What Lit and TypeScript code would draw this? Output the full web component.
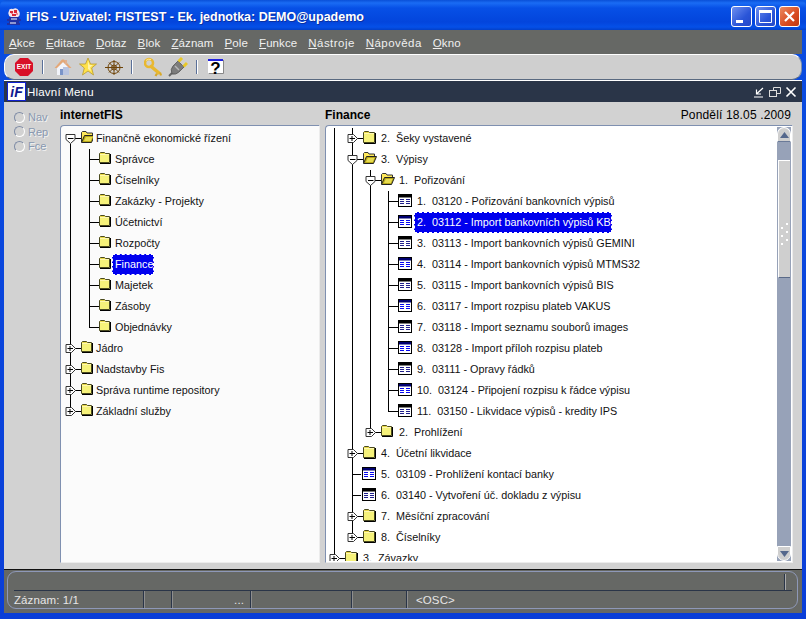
import { LitElement, html, css, svg } from "lit";
import { customElement } from "lit/decorators.js";
import { styleMap } from "lit/directives/style-map.js";

type Row = { g?: number[]; half?: number; exp?: [number, boolean]; h?: [number, number]; icon: string; ix: number; lx: number; t: string; sel?: boolean };

const folderIcon = (x: number, small = false) => {
  const w = small ? 12 : 13;
  return svg`<g transform="translate(${x} 3)">
    <path d="M0.5 1.5 L1.5 0.5 H5.5 L6.5 1.5 H${w - 1.5} V${w === 12 ? 10.5 : 11.5} H0.5 Z" fill="#e8d848" stroke="#4a4a20"/>
    <rect x="1" y="3" width="${w - 3}" height="${w === 12 ? 7 : 8}" fill="#f6f27a"/>
    <path d="M1 2.5 H${w - 2}" stroke="#fff8b0"/>
    <path d="M${w - 0.5} 2 V${w === 12 ? 11.5 : 12.5} H1" stroke="#000" fill="none"/>
  </g>`;
};
const openIcon = (x: number) => svg`<g transform="translate(${x} 3)">
  <path d="M0.5 11 V1.5 L1.5 0.5 H5 L6 2 H11.5 V4" fill="#ffe95a" stroke="#333"/>
  <path d="M0.5 11.5 L3.5 4.5 H13.5 L10.5 11.5 Z" fill="#b8a818" stroke="#222"/>
  <path d="M3 10 L4.8 6 H11.5 L9.8 10 Z" fill="#e8dc50"/>
</g>`;
const docIcon = (x: number, blue: boolean) => {
  const c = blue ? "#0808f0" : "#20208c";
  const hdr = blue ? "#000070" : "#000";
  return svg`<g transform="translate(${x} 3)">
    <rect x="0.5" y="0.5" width="13" height="12" fill="#fff" stroke="#000"/>
    <rect x="1" y="1" width="12" height="2.5" fill="${hdr}"/>
    <path d="M2 5.5 H6 M8 5.5 H12 M2 7.5 H6 M8 7.5 H12 M2 9.5 H6 M8 9.5 H12" stroke="${c}"/>
  </g>`;
};
const expander = (x: number, open: boolean) => open
  ? svg`<path d="M${x} 16 V21" stroke="#000"/><path d="M${x - 4.5} 6.5 H${x + 4.5} V11.5 L${x} 15.5 L${x - 4.5} 11.5 Z" fill="#fff" stroke="#333"/><path d="M${x - 2.5} 10.5 H${x + 3}" stroke="#000"/>`
  : svg`<path d="M${x - 4.5} 6.5 H${x + 1} L${x + 5} 10.5 L${x + 1} 14.5 H${x - 4.5} Z" fill="#fff" stroke="#333"/><path d="M${x - 3} 10.5 H${x + 2.5} M${x - 0.5} 8 V13" stroke="#000"/>`;

const L = (o: Partial<Row>) => o as Row;

const leftRows: Row[] = [
  L({ exp: [70, true], h: [75, 81], icon: "open", ix: 81, lx: 96, t: "Finančně ekonomické řízení" }),
  ...["Správce", "Číselníky", "Zakázky - Projekty", "Účetnictví", "Rozpočty", "Finance", "Majetek", "Zásoby", "Objednávky"].map((t, i, a) =>
    L({ g: i === a.length - 1 ? [70] : [70, 89], half: i === a.length - 1 ? 89 : undefined, h: [89, 100], icon: "folderS", ix: 99, lx: 115, t, sel: t === "Finance" })),
  ...["Jádro", "Nadstavby Fis", "Správa runtime repository", "Základní služby"].map((t, i, a) =>
    L({ g: i === a.length - 1 ? [] : [70], half: i === a.length - 1 ? 70 : undefined, exp: [70, false], h: [75, 81], icon: "folderS", ix: 81, lx: 96, t })),
];

const items = [
  "03120 - Pořizování bankovních výpisů",
  "03112 - Import bankovních výpisů KB",
  "03113 - Import bankovních výpisů GEMINI",
  "03114 - Import bankovních výpisů MTMS32",
  "03115 - Import bankovních výpisů BIS",
  "03117 - Import rozpisu plateb VAKUS",
  "03118 - Import seznamu souborů images",
  "03128 - Import příloh rozpisu plateb",
  "03111 - Opravy řádků",
  "03124 - Připojení rozpisu k řádce výpisu",
  "03150 - Likvidace výpisů - kredity IPS",
];
const rightRows: Row[] = [
  L({ g: [334, 352], exp: [352, false], h: [357, 363], icon: "folder", ix: 363, lx: 381, t: "2.  Šeky vystavené" }),
  L({ g: [334, 352], exp: [352, true], h: [357, 363], icon: "open", ix: 363, lx: 381, t: "3.  Výpisy" }),
  L({ g: [334, 352, 370], exp: [370, true], h: [375, 381], icon: "open", ix: 381, lx: 399, t: "1.  Pořizování" }),
  ...items.map((t, i) => L({ g: i === 10 ? [334, 352, 370] : [334, 352, 370, 388], half: i === 10 ? 388 : undefined, h: [388, 398], icon: i % 2 === 0 ? "doc" : "docB", ix: 398, lx: 417, t: `${i + 1}.  ${t}`, sel: i === 1 })),
  L({ g: [334, 352], half: 370, exp: [370, false], h: [375, 381], icon: "folderS", ix: 381, lx: 399, t: "2.  Prohlížení" }),
  L({ g: [334, 352], exp: [352, false], h: [357, 363], icon: "folder", ix: 363, lx: 381, t: "4.  Účetní likvidace" }),
  L({ g: [334, 352], h: [352, 361], icon: "docB", ix: 362, lx: 381, t: "5.  03109 - Prohlížení kontací banky" }),
  L({ g: [334, 352], h: [352, 361], icon: "doc", ix: 362, lx: 381, t: "6.  03140 - Vytvoření úč. dokladu z výpisu" }),
  L({ g: [334, 352], exp: [352, false], h: [357, 363], icon: "folder", ix: 363, lx: 381, t: "7.  Měsíční zpracování" }),
  L({ g: [334], half: 352, exp: [352, false], h: [357, 363], icon: "folder", ix: 363, lx: 381, t: "8.  Číselníky" }),
  L({ g: [], half: 334, exp: [334, false], h: [339, 345], icon: "folder", ix: 345, lx: 363, t: "3.  Závazky" }),
];

const menu = ["Akce", "Editace", "Dotaz", "Blok", "Záznam", "Pole", "Funkce", "Nástroje", "Nápověda", "Okno"];

@customElement("app-root")
export class AppRoot extends LitElement {
  static styles = css`
    :host { display: block; width: 806px; height: 619px; overflow: hidden; font-family: "Liberation Sans", Arial, sans-serif; font-size: 11px; background: #0a3ed8; }
    .win { width: 806px; height: 619px; display: flex; flex-direction: column; box-sizing: border-box; padding: 0 4px 6px 4px;
      background: linear-gradient(180deg, #0a5ae8 0, #0a4ce0 30px, #0a3ed8 100%); }
    .title { height: 30px; flex: none; box-sizing: border-box; margin: 0 -4px; padding: 3px 6px 0 6px; display: flex; align-items: center; color: #fff; font-weight: bold; font-size: 12.5px;
      background: linear-gradient(180deg, #0a50d8 0, #1a6cf4 3px, #0750e6 8px, #0345dc 22px, #0550e8 27px, #0340c8 30px); border-radius: 6px 6px 0 0; }
    .title .logo { margin-right: 4px; flex: none; }
    .title .txt { flex: 1; white-space: pre; text-shadow: 1px 1px 0 #0a2fa0; }
    .cap { width: 21px; height: 21px; box-sizing: border-box; border: 1px solid #fff; border-radius: 3px; margin-left: 3px; display: block; flex: none; }
    .cap.b { background: linear-gradient(135deg, #6f90f0, #2a55d8 60%, #2448c8); }
    .cap.r { background: linear-gradient(135deg, #ec8a60, #d84a20 60%, #c03810); }
    .menu { height: 24px; flex: none; background: #666865; display: flex; align-items: center; padding-left: 5px; color: #f0f0f0; font-size: 11.5px; letter-spacing: .1px; box-sizing: border-box; padding-top: 2px; }
    .menu span { margin-right: 11px; white-space: pre; }
    .menu span:nth-child(8), .menu span:nth-child(9) { letter-spacing: .45px; }
    .menu u { text-decoration: underline; text-underline-offset: 1px; }
    .toolbar { height: 26px; flex: none; box-sizing: border-box; background: #cfcfcf; border-top: 1px solid #fff; border-bottom: 1px solid #5a6a80; border-left: 1px solid #fff; border-right: 1px solid #8090a8; border-radius: 10px; display: flex; align-items: center; padding-left: 9px; }
    .toolbar svg { flex: none; display: block; }
    .sep { width: 3px; height: 14px; flex: none; background: linear-gradient(90deg, #5a7098 0 1px, #fff 1px 2px, transparent 2px); }
    .inner { flex: 1; min-height: 0; display: flex; flex-direction: column; background: #d2d2d2; border-top: 1px solid #fff; }
    .ibar { height: 21px; flex: none; background: #2a3548; color: #fff; display: flex; align-items: center; font-size: 11.5px; padding: 0 5px 0 3px; }
    .ibar .lg { flex: none; margin-right: 1px; }
    .ibar .ttl { flex: 1; white-space: pre; letter-spacing: .2px; }
    .ibar svg.c { display: block; margin-left: 4px; flex: none; }
    .ibody { flex: 1; min-height: 0; display: grid; grid-template-columns: 51px 260px 468px; column-gap: 5px; padding: 5px 9px 6px 0; }
    .radios { padding: 3px 0 0 10px; display: flex; flex-direction: column; gap: .5px; color: #8898b0; font-size: 11px; }
    .radio { height: 14px; display: flex; align-items: center; gap: 3px; }
    .radio span { text-shadow: 1px 1px 0 #f2f2f2; }
    .radio i { width: 11px; height: 11px; box-sizing: border-box; border-radius: 50%; border: 1px solid #7f8ca6; border-bottom-color: #fff; border-right-color: #fff; flex: none; background: #d2d2d2; }
    .col { display: flex; flex-direction: column; min-height: 0; min-width: 0; }
    .hd { flex: none; font-weight: bold; font-size: 12px; color: #000; display: flex; align-items: center; justify-content: space-between; padding-bottom: 3px; height: 15px; }
    .hd .d { font-weight: normal; font-size: 12px; letter-spacing: .15px; padding-right: 2px; }
    .panel { flex: 1; min-height: 0; overflow: hidden; box-sizing: border-box; background: #fff; padding: 1px; border: 1px solid #ececec; border-top-color: #7f90b0; border-left-color: #7f90b0; border-radius: 4px 0 0 0; display: flex; }
    .panel.l { background: #fbfbfb; }
    .rows { flex: 1; min-width: 0; overflow: hidden; padding-top: 1px; }
    .row { height: 21px; display: flex; align-items: center; color: #111; white-space: pre; font-size: 10.8px; }
    .row svg { flex: none; display: block; align-self: stretch; }
    .lbl { padding: 0 1px 0 3px; line-height: 21px; }
    .lbl.sel { background: #0000ee; color: #fff; outline: 1px dashed #fff; outline-offset: -1px; }
    .sb { width: 14px; flex: none; background: #97a2b8; display: flex; flex-direction: column; }
    .sbb { height: 15px; flex: none; background: #cfcfcf; display: flex; align-items: center; justify-content: center; box-sizing: border-box; }
    .sbb.u { border-radius: 7px 7px 0 0; border-top: 1px solid #fff; border-right: 1px solid #fff; border-left: 1px solid #fff; border-bottom: 1px solid #6a7a98; }
    .sbb.d { border-radius: 0 0 7px 7px; border: 1px solid #fff; }
    .thumb { height: 118px; margin: 18px 1px 0 1px; flex: none; background: #cfcfcf; border-top: 1px solid #fff; border-left: 1px solid #fff; border-bottom: 1px solid #5a6a88; display: flex; align-items: center; justify-content: center; box-sizing: border-box; padding-top: 30px; }
    .sp { flex: 1; }
    .status { height: 44px; flex: none; background: #666865; padding: 1px 4px 4px 3px; border-top: 1px solid #111; box-sizing: border-box; }
    .sbox { height: 38px; box-sizing: border-box; border: 1px solid #8e98b8; border-radius: 9px; padding: 0 5px 0 6px; display: flex; flex-direction: column; }
    .stop { height: 18px; flex: none; border-bottom: 1px solid #2a3548; display: flex; justify-content: flex-end; }
    .sbot { flex: 1; display: grid; grid-template-columns: 130px 28px 79px 101px 55px 1fr; color: #e6e6e6; font-size: 11.5px; letter-spacing: .1px; align-items: center; }
    .cell { height: 100%; display: flex; align-items: center; white-space: pre; }
    .cell + .cell { padding-left: 9px; }
    .dots { justify-content: flex-end; padding-right: 6px; }
    .dv { border-right: 1px solid #2a3548; box-shadow: 1px 0 0 #8e8e8e; }
    .dv2 { width: 1px; background: #2a3548; box-shadow: 1px 0 0 #aaa; margin: 2px 7px 0 0; }
    .m7 { margin-left: 7px; }
    .m8 { margin-left: 8px; }
    .m6 { margin-left: 6px; }
    .s1 { margin: 0 9px 0 8px; }
    .s2 { margin: 0 10px 0 8px; }
    .s3 { margin: 0 8px 0 8px; }
  `;

  private row(r: Row, origin: number) {
    const w = r.lx - origin - 3;
    let icon;
    if (r.icon === "open") icon = openIcon(r.ix);
    else if (r.icon === "folder") icon = folderIcon(r.ix);
    else if (r.icon === "folderS") icon = folderIcon(r.ix, true);
    else icon = docIcon(r.ix, r.icon === "docB");
    return html`<div class="row">
      <svg width=${w} height="21" viewBox="${origin} 0 ${w} 21">
        ${(r.g ?? []).map((x) => svg`<path d="M${x + 0.5} 0 V21" stroke="#000"/>`)}
        ${r.half !== undefined ? svg`<path d="M${r.half + 0.5} 0 V10.5" stroke="#000"/>` : ""}
        ${r.h ? svg`<path d="M${r.h[0]} 10.5 H${r.h[1]}" stroke="#000"/>` : ""}
        ${r.exp ? expander(r.exp[0] + 0.5, r.exp[1]) : ""}
        ${icon}
      </svg>
      <span class="lbl ${r.sel ? "sel" : ""}">${r.t}</span>
    </div>`;
  }

  render() {
    return html`<div class="win">
      <div class="title">
        <svg class="logo" width="16" height="18" viewBox="0 0 16 18">
          <path d="M3 3 Q3 0 7 1 Q11 -1 13 3 Q15 7 12 9 H5 Q1 7 3 3 Z" fill="#f4e4ea"/>
          <path d="M4 3 h3 v2 h-3z M8 2 h3 v3 h-3z M6 6 h4 v2 h-4z" fill="#d82838"/>
          <path d="M5 5 h2 v1 h-2z M10 5 h2 v2 h-2z" fill="#f08898"/>
          <path d="M3 10 H13 M1 12 H15 M3 14 H13 M1 16 H14" stroke="#2a2a90" stroke-width="1.3"/>
          <path d="M5 11 H11 M4 15 H10" stroke="#fff"/>
        </svg>
        <span class="txt">iFIS - Uživatel: FISTEST - Ek. jednotka: DEMO@upademo</span>
        <svg class="cap b" viewBox="0 0 19 19"><rect x="4" y="13" width="7" height="3" fill="#fff"/></svg>
        <svg class="cap b" viewBox="0 0 19 19"><path d="M3.5 4 H15.5 V15.5 H3.5 Z" fill="none" stroke="#fff"/><rect x="3" y="3" width="13" height="3" fill="#fff"/></svg>
        <svg class="cap r" viewBox="0 0 19 19"><path d="M5 5 L14 14 M14 5 L5 14" stroke="#fff" stroke-width="2.2"/></svg>
      </div>
      <div class="menu">
        ${menu.map((m) => html`<span><u>${m[0]}</u>${m.slice(1)}</span>`)}
      </div>
      <div class="toolbar">
        <svg width="20" height="20" viewBox="0 0 20 20"><path d="M6 1 H14 L19 6 V14 L14 19 H6 L1 14 V6 Z" fill="#d81028"/><text x="10" y="12.4" text-anchor="middle" font-family="Liberation Sans" font-size="6.5" font-weight="bold" fill="#fff">EXIT</text></svg>
        <span class="sep s1"></span>
        <svg width="18" height="20" viewBox="0 0 18 20"><path d="M3 10 V18 H15 V10 L9 5 Z" fill="#f2f4fa"/><path d="M9 10 V18 H15 V10 Z" fill="#b8c4e0"/><path d="M0.5 11 L8 2.5 H10 L17.5 11 L15 11 L9 5 L3 11 Z" fill="#e4a878"/><rect x="11" y="3" width="2" height="4" fill="#e0b090"/><rect x="6" y="12" width="3" height="6" fill="#7a94c8"/></svg>
        <svg class="m7" width="18" height="20" viewBox="0 0 18 20"><path d="M9 1 L11.5 7 H17.5 L12.7 11 L14.5 18 L9 14 L3.5 18 L5.3 11 L0.5 7 H6.5 Z" fill="#ffe24a" stroke="#b89a30" stroke-width=".8"/><path d="M9 4 L10.5 8 H14 L11 10.5 L12 14 L9 12 Z" fill="#fff3a8"/></svg>
        <svg class="m8" width="18" height="20" viewBox="0 0 18 20"><g fill="none" stroke="#6e4408" stroke-width="1"><path d="M0 10.5 H18 M9 3 V18 M4 5.5 L14 15.5 M14 5.5 L4 15.5"/><circle cx="9" cy="10.5" r="6"/><circle cx="9" cy="10.5" r="2.5"/></g></svg>
        <span class="sep s2"></span>
        <svg width="18" height="20" viewBox="0 0 18 20"><path d="M6 8.5 L15.5 16.5" stroke="#e8b830" stroke-width="3.4"/><path d="M13 16.5 L11.5 19 M16 15.5 L17 18.5" stroke="#d8a828" stroke-width="2.2"/><circle cx="5" cy="6" r="4" fill="none" stroke="#e8b830" stroke-width="2.6"/><path d="M2 3.5 Q4 1.5 7 2.5" stroke="#ffe890" fill="none"/></svg>
        <svg class="m6" width="20" height="20" viewBox="0 0 20 20"><path d="M1 19 L4 16" stroke="#666" stroke-width="2"/><path d="M4 17 Q2 12 5 9 L10 4 L16 10 L11 15 Q8 18 4 17 Z" fill="#7c7c7c" stroke="#4a4a4a" stroke-width=".7"/><path d="M7 9 L11 13" stroke="#b8b8b8" stroke-width="1.5"/><path d="M10.5 4.5 L14 1 M15.5 9.5 L19 6" stroke="#e8c828" stroke-width="3"/></svg>
        <span class="sep s3"></span>
        <svg width="17" height="20" viewBox="0 0 17 20"><rect x="1" y="2" width="15" height="14" fill="#fff"/><rect x="1" y="2" width="15" height="2" fill="#2020e0"/><path d="M16.5 3 V16.5 H2" stroke="#888" fill="none"/><text x="8.5" y="17" text-anchor="middle" font-family="Liberation Sans" font-size="17" font-weight="bold" fill="#000">?</text></svg>
      </div>
      <div class="inner">
        <div class="ibar">
          <svg class="lg" width="19" height="19" viewBox="0 0 19 19"><rect x=".5" y=".5" width="18" height="18" fill="#fff" stroke="#1020d0"/><text x="9.5" y="14.5" text-anchor="middle" font-family="Liberation Sans" font-size="14" font-weight="bold" font-style="italic" fill="#101890">iF</text></svg>
          <span class="ttl">Hlavní Menu</span>
          <svg class="c" width="12" height="12" viewBox="0 0 12 12"><path d="M10 2 L4 7.5 M3.5 3.5 V8 H8 M1 11 H10" stroke="#fff" stroke-width="1.2" fill="none"/></svg>
          <svg class="c" width="12" height="12" viewBox="0 0 12 12"><path d="M4.5 1.5 H11.5 V7.5 H8 M4.5 1.5 V4" stroke="#ddd" fill="none"/><rect x=".5" y="4.5" width="7" height="6" fill="none" stroke="#ddd"/></svg>
          <svg class="c" width="12" height="12" viewBox="0 0 12 12"><path d="M1.5 1.5 L10.5 10.5 M10.5 1.5 L1.5 10.5" stroke="#fff" stroke-width="1.6"/></svg>
        </div>
        <div class="ibody">
          <div class="radios">
            ${["Nav", "Rep", "Fce"].map((t) => html`<div class="radio"><i></i><span>${t}</span></div>`)}
          </div>
          <div class="col">
            <div class="hd">internetFIS</div>
            <div class="panel l"><div class="rows">${leftRows.map((r) => this.row(r, 62))}</div></div>
          </div>
          <div class="col">
            <div class="hd"><span>Finance</span><span class="d">Pondělí 18.05 .2009</span></div>
            <div class="panel">
              <div class="rows">${rightRows.map((r) => this.row(r, 327))}</div>
              <div class="sb">
                <div class="sbb u"><svg width="9" height="6" viewBox="0 0 9 6"><path d="M4.5 0 L9 6 H0 Z" fill="#55688c"/></svg></div>
                <div class="thumb"><svg width="7" height="24" viewBox="0 0 7 24"><path d="M5 1h2v2h-2z M0 5h2v2h-2z M5 9h2v2h-2z M0 13h2v2h-2z M5 17h2v2h-2z M0 21h2v2h-2z" fill="#fff"/></svg></div>
                <div class="sp"></div>
                <div class="sbb d"><svg width="9" height="6" viewBox="0 0 9 6"><path d="M0 0 H9 L4.5 6 Z" fill="#55688c"/></svg></div>
              </div>
            </div>
          </div>
        </div>
      </div>
      <div class="status">
        <div class="sbox">
          <div class="stop"><div class="dv2"></div></div>
          <div class="sbot">
            <div class="cell dv">Záznam: 1/1</div>
            <div class="cell dv"></div>
            <div class="cell dv dots">...</div>
            <div class="cell dv"></div>
            <div class="cell dv"></div>
            <div class="cell">&lt;OSC&gt;</div>
          </div>
        </div>
      </div>
    </div>`;
  }
}
